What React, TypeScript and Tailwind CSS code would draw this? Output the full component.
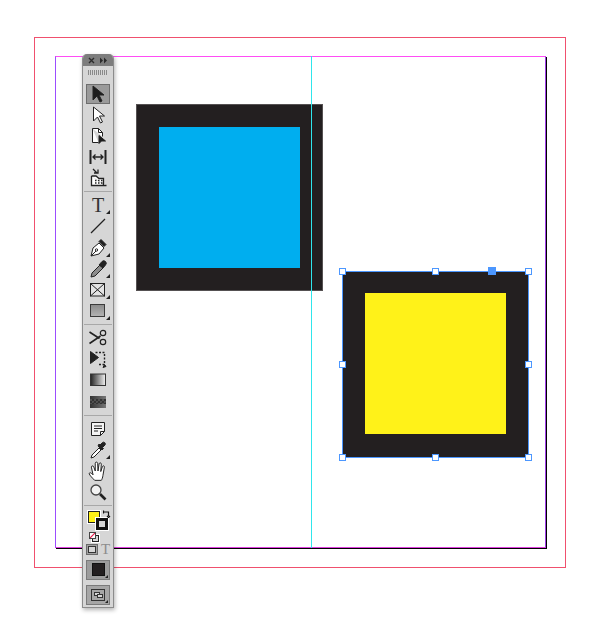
import type { ReactNode } from "react";

function Tool({ children, active, corner }: { children: ReactNode; active?: boolean; corner?: boolean }) {
  return (
    <div className="flex h-[21.15px] w-full shrink-0 items-center justify-center">
      <div
        className={
          active
            ? "relative flex h-[20px] w-[24px] items-center justify-center border border-[#6e6e6e] bg-[#9a9a9a]"
            : "relative flex h-[20px] w-[24px] items-center justify-center"
        }
      >
        {children}
        {corner && (
          <span className="absolute bottom-[1px] right-[0px] h-0 w-0 border-b-[4px] border-l-[4px] border-b-[#222] border-l-transparent" />
        )}
      </div>
    </div>
  );
}

function Icon({ children }: { children: ReactNode }) {
  return (
    <svg width="20" height="20" viewBox="0 0 20 20" fill="none" stroke="#222" strokeWidth="1">
      {children}
    </svg>
  );
}

function Separator() {
  return <div className="mx-[1px] my-[2.5px] h-px shrink-0 bg-[#a8a8a8]" />;
}

function Toolbar() {
  return (
    <div className="absolute left-[82px] top-[54px] flex h-[554px] w-[32px] flex-col overflow-hidden rounded-t-[5px] border border-t-0 border-[#8c8c8c] bg-[#d6d6d6] shadow-[1px_2px_4px_rgba(0,0,0,0.3)]">
      <div className="flex h-[12px] shrink-0 items-center justify-between bg-[#7d7d7d] px-[5px]">
        <svg width="7" height="7" viewBox="0 0 7 7" stroke="#2b2b2b" strokeWidth="1.400">
          <path d="M1 1l5 5M6 1l-5 5" />
        </svg>
        <svg width="8" height="7" viewBox="0 0 8 7" fill="#2b2b2b">
          <path d="M0 0.500l3 3-3 3zM4 0.500l3 3-3 3z" />
        </svg>
      </div>
      <div className="mx-auto mb-[8px] mt-[4px] h-[5px] w-[20px] shrink-0 bg-[repeating-linear-gradient(90deg,#8a8a8a_0,#8a8a8a_1px,transparent_1px,transparent_2px)]" />
      <Tool active>
        <Icon>
          <path d="M5 2v14l4-4 3 6 2-1-3-6h5z" fill="#1c1c1c" />
        </Icon>
      </Tool>
      <Tool>
        <Icon>
          <path d="M5.500 2v14l4-4 3 6 2-1-3-6h5z" fill="#fff" />
        </Icon>
      </Tool>
      <Tool>
        <Icon>
          <path d="M4.500 2.500h6l4 4v4M14.500 6.500h-4v-4M4.500 2.500v14h6" fill="#fff" />
          <path d="M11 9.500v8l2.500-2.500h4z" fill="#1c1c1c" />
        </Icon>
      </Tool>
      <Tool>
        <Icon>
          <path d="M2.500 3v14M17.500 3v14" strokeWidth="2" />
          <path d="M5 10h10M7.500 7.500L5 10l2.500 2.500M12.500 7.500L15 10l-2.500 2.500" strokeWidth="1.300" />
        </Icon>
      </Tool>
      <Tool>
        <Icon>
          <path d="M5 1l4 4M6 5h4V1.500" strokeWidth="1.300" />
          <path d="M3.500 8v9.500h15M3.500 8H8l3 2.500h4.500v7" strokeWidth="1.300" fill="#fff" />
          <path d="M7 12.500h1.500M10 12.500h1.500M13 12.500h1.500M7 15h1.500M10 15h1.500M13 15h1.500" strokeWidth="1.500" />
        </Icon>
      </Tool>
      <Separator />
      <Tool corner>
        <span className="font-['Liberation_Serif',serif] text-[20px] leading-[20px] text-[#333]">T</span>
      </Tool>
      <Tool>
        <Icon>
          <path d="M3 17L17 3" strokeWidth="1.200" />
        </Icon>
      </Tool>
      <Tool corner>
        <Icon>
          <path d="M3 18l2-8 6-5 5 5-5 6z" fill="#fff" />
          <path d="M3 18l5-5" />
          <circle cx="8.500" cy="12" r="1.200" />
          <path d="M11 3.500l2-2 5 5-2 2z" fill="#222" />
        </Icon>
      </Tool>
      <Tool corner>
        <Icon>
          <path d="M3 18l1-4 8-8 3 3-8 8z" fill="#8c8c8c" />
          <path d="M11 6l3-3.500a2 2 0 013.500 3.500L15 9z" fill="#222" />
        </Icon>
      </Tool>
      <Tool corner>
        <Icon>
          <rect x="2.500" y="3.500" width="14" height="12.500" fill="#e4e4e4" />
          <path d="M2.500 3.500l14 12.500M16.500 3.500l-14 12.500" />
        </Icon>
      </Tool>
      <Tool corner>
        <Icon>
          <defs>
            <linearGradient id="rectFill" x1="0" y1="0" x2="0" y2="1">
              <stop offset="0" stopColor="#8a8a8a" />
              <stop offset="1" stopColor="#b4b4b4" />
            </linearGradient>
          </defs>
          <rect x="2.500" y="3.500" width="14" height="12" fill="url(#rectFill)" stroke="#3a3a3a" />
        </Icon>
      </Tool>
      <Separator />
      <Tool>
        <Icon>
          <path d="M1.500 4l10 6.500M1.500 15.500L12.500 8" strokeWidth="1.600" />
          <circle cx="15" cy="5" r="2.700" strokeWidth="1.200" />
          <circle cx="15" cy="14" r="2.700" strokeWidth="1.200" />
        </Icon>
      </Tool>
      <Tool>
        <Icon>
          <path d="M2.500 2.500l8 6-8 6z" fill="#222" />
          <path d="M7.500 3.500h9v12h-7" strokeDasharray="2 1.500" strokeWidth="1.400" />
          <path d="M15 18.500l3-1-1.500-2z" fill="#222" />
        </Icon>
      </Tool>
      <Tool>
        <Icon>
          <defs>
            <linearGradient id="gradSwatch" x1="0" y1="0" x2="1" y2="0">
              <stop offset="0" stopColor="#222" />
              <stop offset="1" stopColor="#f2f2f2" />
            </linearGradient>
          </defs>
          <rect x="2.500" y="4" width="15" height="11.500" fill="url(#gradSwatch)" stroke="#333" />
        </Icon>
      </Tool>
      <Tool>
        <Icon>
          <defs>
            <pattern id="feather" width="4" height="4" patternUnits="userSpaceOnUse" y="1">
              <rect width="4" height="4" fill="#6a6a6a" />
              <rect width="2" height="2" fill="#e0e0e0" />
              <rect x="2" y="2" width="2" height="2" fill="#e0e0e0" />
            </pattern>
            <linearGradient id="featherTop" x1="0" y1="0" x2="1" y2="0">
              <stop offset="0" stopColor="#333" />
              <stop offset="1" stopColor="#777" />
            </linearGradient>
          </defs>
          <rect x="2" y="4" width="16" height="3" fill="url(#featherTop)" stroke="none" />
          <rect x="2" y="7" width="16" height="5" fill="url(#feather)" stroke="none" />
          <rect x="2" y="12" width="16" height="4" fill="url(#featherTop)" stroke="none" />
        </Icon>
      </Tool>
      <Separator />
      <Tool>
        <Icon>
          <path d="M3.500 3.500h13v9l-4 4h-9z" fill="#f4f4f4" />
          <path d="M16.500 12.500h-4v4M6 7h8M6 9.500h8M6 12h4" />
        </Icon>
      </Tool>
      <Tool corner>
        <Icon>
          <path d="M3 18l1-3 7-7 2 2-7 7z" fill="#fff" />
          <path d="M10 6l4 4 1.500-1.500-1-1 2.500-2.500a1.800 1.800 0 00-2.500-2.500L12 5l-1-1z" fill="#222" />
        </Icon>
      </Tool>
      <Tool>
        <svg width="22" height="22" viewBox="0 0 20 20" fill="none" stroke="#222" strokeWidth="0.900">
          <path
            d="M7 18.500c-2-2-4.500-4.500-5-6 0-1 1-1.200 2-.5l1.500 1.500-1.500-7c0-1.500 1.800-1.500 2.200 0L7.500 10V3c0-1.500 2-1.500 2.200 0l.3 7 1-6.500c.3-1.300 2-1.200 2 .2L12.500 10.500l1.500-4.500c.5-1.200 2-.8 1.800.5L14.500 14c-.3 2-.8 3.500-1.500 4.500z"
            fill="#fff"
          />
        </svg>
      </Tool>
      <Tool>
        <Icon>
          <circle cx="8" cy="8" r="5" fill="#f2f2f2" stroke="#444" strokeWidth="1.300" />
          <path d="M12 12l5.500 5.500" strokeWidth="2.600" />
        </Icon>
      </Tool>
      <Separator />
      <div className="relative mt-[1px] h-[22px] w-full shrink-0">
        <span className="absolute left-[5px] top-[1px] h-[12px] w-[12px] border border-[#222] bg-[#fff219] shadow-[0_0_0_1px_#fff]" />
        <span className="absolute left-[13px] top-[8px] flex h-[12px] w-[12px] items-center justify-center bg-[#111] shadow-[0_0_0_1px_#fff]">
          <span className="h-[6px] w-[6px] bg-[#d6d6d6]" />
        </span>
        <svg className="absolute left-[20px] top-[0px]" width="8" height="8" viewBox="0 0 8 8" fill="none" stroke="#111" strokeWidth="1.200">
          <path d="M1 2h4.500v4M0.500 0.500V3.500M4 6l1.500 1.500L7 6" />
        </svg>
      </div>
      <div className="relative h-[11px] w-full shrink-0">
        <span className="absolute left-[9px] top-[3px] h-[7px] w-[7px] border border-[#222] bg-[#d6d6d6] shadow-[0_0_0_1px_#fff]" />
        <span className="absolute left-[6px] top-[0px] h-[7px] w-[7px] overflow-hidden border border-[#444] bg-white">
          <svg className="absolute inset-0" width="5" height="5" viewBox="0 0 5 5" stroke="#e6194b" strokeWidth="1.200">
            <path d="M0 5L5 0" />
          </svg>
        </span>
      </div>
      <div className="flex h-[14px] w-full shrink-0 items-center gap-[3px] pl-[3px]">
        <span className="flex h-[11px] w-[12px] items-center justify-center border border-[#6a6a6a] bg-[#a2a2a2]">
          <span className="h-[7px] w-[8px] border border-[#333] bg-[#d6d6d6]" />
        </span>
        <span className="font-['Liberation_Serif',serif] text-[15px] leading-none text-[#8c8c8c]">T</span>
      </div>
      <div className="relative mx-auto mt-[3px] flex h-[20px] w-[24px] shrink-0 items-center justify-center border border-[#7a7a7a] bg-[#9c9c9c]">
        <span className="h-[13px] w-[13px] border border-[#111] bg-[#231f20]" />
        <span className="absolute bottom-[1px] right-[1px] h-0 w-0 border-b-[3px] border-l-[3px] border-b-[#222] border-l-transparent" />
      </div>
      <div className="relative mx-auto mt-[5px] flex h-[20px] w-[24px] shrink-0 items-center justify-center border border-[#7a7a7a] bg-[#a6a6a6]">
        <svg width="14" height="12" viewBox="0 0 14 12" fill="none" stroke="#333">
          <rect x="0.500" y="0.500" width="13" height="11" />
          <rect x="3.500" y="3.500" width="5" height="3" fill="#d6d6d6" />
          <rect x="6.500" y="5.500" width="5" height="3" fill="#d6d6d6" />
        </svg>
        <span className="absolute bottom-[1px] right-[1px] h-0 w-0 border-b-[3px] border-l-[3px] border-b-[#222] border-l-transparent" />
      </div>
    </div>
  );
}

function Handle({ className }: { className: string }) {
  return <span className={`absolute h-[7px] w-[7px] border border-[#4c97ff] bg-white ${className}`} />;
}

export default function App() {
  return (
    <div className="relative h-[632px] w-[611px] overflow-hidden bg-white">
      {/* bleed */}
      <div className="absolute left-[34px] top-[37px] h-[531px] w-[532px] border border-[#f0506e]" />
      {/* page shadow */}
      <div className="absolute left-[56px] top-[57px] h-[492px] w-[491px] bg-black" />
      {/* page + margins */}
      <div className="absolute left-[55px] top-[56px] h-[492px] w-[491px] border border-t-[#ff4df5] border-r-[#a040e8] border-b-[#e040e0] border-l-[#9b4dff] bg-white" />

      <div className="absolute left-[136px] top-[104px] flex h-[187px] w-[187px] items-center justify-center border border-[#555152] bg-[#231f20]">
        <div className="h-[141px] w-[141px] bg-[#00aeef]" />
      </div>
      <div className="absolute left-[342px] top-[271px] flex h-[187px] w-[187px] justify-center border border-[#4c97ff] bg-[#231f20] pt-[21px]">
        <div className="h-[141px] w-[141px] bg-[#fff219]" />
      </div>

      {/* spine */}
      <div className="absolute left-[311px] top-[56px] h-[492px] w-px bg-[#2fe6ec]" />

      {/* selection handles */}
      <Handle className="left-[339px] top-[268px]" />
      <Handle className="left-[432px] top-[268px]" />
      <span className="absolute left-[488px] top-[267px] h-[8px] w-[8px] bg-[#4c97ff]" />
      <Handle className="left-[525px] top-[268px]" />
      <Handle className="left-[339px] top-[361px]" />
      <Handle className="left-[525px] top-[361px]" />
      <Handle className="left-[339px] top-[454px]" />
      <Handle className="left-[432px] top-[454px]" />
      <Handle className="left-[525px] top-[454px]" />

      <Toolbar />
    </div>
  );
}
